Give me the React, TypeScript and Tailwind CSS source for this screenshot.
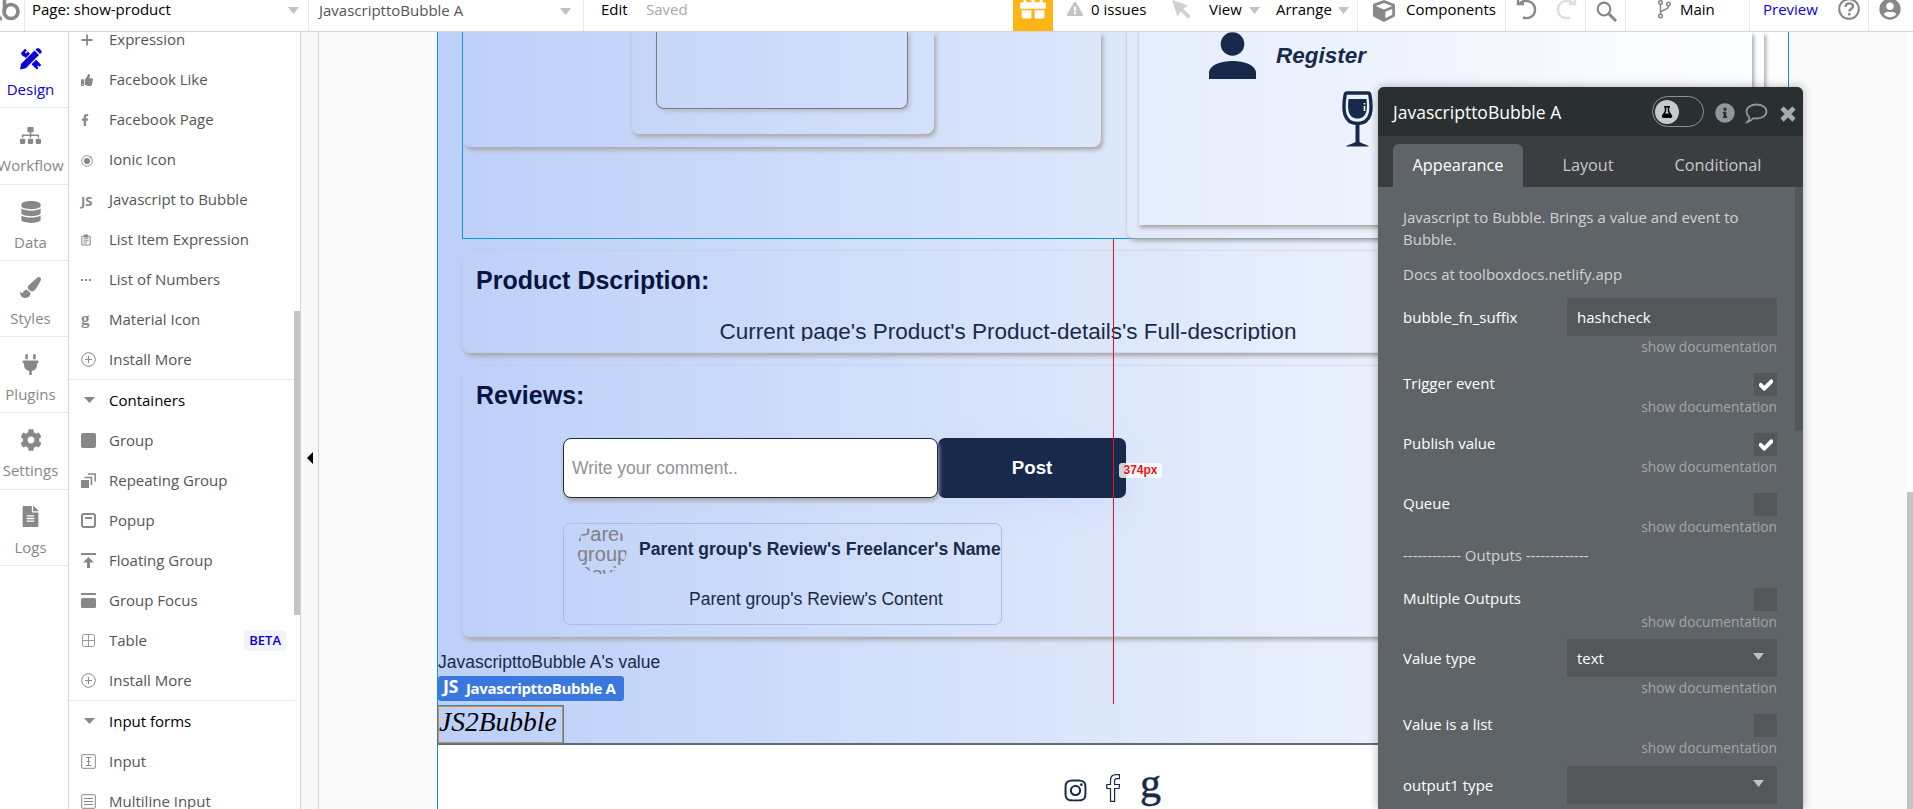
import React from "react";
import {
  FaSitemap, FaDatabase, FaPaintBrush, FaPlug, FaCog, FaFileAlt, FaThumbsUp, FaFacebookF,
  FaGift, FaExclamationTriangle, FaCube, FaFlask, FaInfoCircle, FaCheck,
  FaUserCircle, FaInstagram,
} from "react-icons/fa";

type IconName =
  | "plus" | "thumb" | "fb" | "ionic" | "js" | "clip" | "dots" | "g" | "more" | "caret" | "group"
  | "repeat" | "popup" | "float" | "focus" | "table" | "input" | "multi";

function PaletteIcon({ name }: { name: IconName }) {
  switch (name) {
    case "plus":
      return <svg className="mt-0.5 size-3" viewBox="0 0 12 12"><path d="M6 .5v11M.5 6h11" stroke="#888" strokeWidth="1.800" /></svg>;
    case "thumb":
      return <FaThumbsUp className="mt-0.5 size-3" />;
    case "fb":
      return <FaFacebookF className="mt-0.5 h-3 w-2" />;
    case "ionic":
      return (
        <svg className="mt-1 size-3" viewBox="0 0 14 14" fill="none" stroke="#888">
          <circle cx="7" cy="7" r="6.200" /><circle cx="7" cy="7" r="3.600" fill="#888" stroke="none" /><circle cx="11.500" cy="2.500" r="1" fill="#888" stroke="none" />
        </svg>
      );
    case "js":
      return <span className="mt-1 text-[13px] leading-none font-bold">JS</span>;
    case "clip":
      return (
        <svg className="mt-0.5 h-3.5 w-2.5" viewBox="0 0 12 14" fill="none" stroke="#888" strokeWidth="1.200">
          <path d="M1 2.500h10v10.500H1zM3 5.500h6M3 8h6M3 10.500h4" /><path d="M4 1h4v2.500H4z" fill="#888" />
        </svg>
      );
    case "dots":
      return <svg className="mt-0.5 h-1 w-2.5" viewBox="0 0 10 4" fill="#888"><path d="M0 1h2v2H0zM4 1h2v2H4zM8 1h2v2H8z" /></svg>;
    case "g":
      return <span className="pb-0.5 font-['Liberation_Serif',serif] text-[17px] leading-none font-bold">g</span>;
    case "more":
      return (
        <svg className="size-[15px]" viewBox="0 0 15 15" fill="none" stroke="#888"><circle cx="7.500" cy="7.500" r="6.800" /><path d="M7.500 4v7M4 7.500h7" /></svg>
      );
    case "caret":
      return <svg className="ml-[3px] h-1.5 w-[11px]" viewBox="0 0 11 6" fill="#888"><path d="M0 0h11L5.500 6z" /></svg>;
    case "group":
      return <span className="size-[15px] rounded-[2px] bg-[#888]" />;
    case "repeat":
      return (
        <svg className="size-[15px]" viewBox="0 0 15 15" fill="none" stroke="#888" strokeWidth="1.500">
          <path d="M0 7h8v8H0z" fill="#888" stroke="none" /><path d="M3.500 4.500h7V12M7 1h7.200v7.500" />
        </svg>
      );
    case "popup":
      return (
        <svg className="size-[15px]" viewBox="0 0 15 15" fill="none" stroke="#888" strokeWidth="2"><rect x="1" y="1" width="13" height="13" rx="2" /><path d="M4 5h7" /></svg>
      );
    case "float":
      return <svg className="size-[15px]" viewBox="0 0 15 15" fill="#888"><path d="M0 0h15v2H0zM7.500 4l5.500 5.500H9V15H6V9.500H2z" /></svg>;
    case "focus":
      return <svg className="size-[15px]" viewBox="0 0 15 15" fill="#888"><path d="M0 0h15v2H0z" /><rect y="5" width="15" height="10" rx="1.500" /></svg>;
    case "table":
      return <svg className="size-[15px]" viewBox="0 0 15 15" fill="none" stroke="#999"><rect x="1.500" y="1.500" width="12" height="12" rx="2" /><path d="M7.500 1.500v12M1.500 7.500h12" /></svg>;
    case "input":
      return <svg className="size-[15px]" viewBox="0 0 15 15" fill="none" stroke="#888"><rect x=".7" y=".7" width="13.600" height="13.600" rx="1" /><path d="M5 3.500h5M5 11.500h5M7.500 3.500v8M6 7.500h3" /></svg>;
    default:
      return <svg className="size-[15px]" viewBox="0 0 15 15" fill="none" stroke="#888"><rect x=".7" y=".7" width="13.600" height="13.600" rx="1" /><path d="M3 4.500h9M3 7.500h9M3 10.500h9" /></svg>;
  }
}

function PaletteRow({ icon, label, beta }: { icon: IconName; label: string; beta?: boolean }) {
  return (
    <div className="flex h-10 shrink-0 items-center">
      <div className="flex w-7 items-center text-[#888]"><PaletteIcon name={icon} /></div>
      <span className={icon === "caret" ? "text-black" : "text-[#555]"}>{label}</span>
      {beta && <span className="mr-[14px] ml-auto rounded bg-[#f3f3fd] px-[5px] text-[13px] leading-[21px] font-semibold text-[#0c00d8]">BETA</span>}
    </div>
  );
}

function Palette() {
  return (
    <div className="relative w-[233px] overflow-hidden border-x border-[#d3d3d3] bg-white text-[15px]">
      <div className="-mt-[13px] flex flex-col pl-3">
        <PaletteRow icon="plus" label="Expression" />
        <PaletteRow icon="thumb" label="Facebook Like" />
        <PaletteRow icon="fb" label="Facebook Page" />
        <PaletteRow icon="ionic" label="Ionic Icon" />
        <PaletteRow icon="js" label="Javascript to Bubble" />
        <PaletteRow icon="clip" label="List Item Expression" />
        <PaletteRow icon="dots" label="List of Numbers" />
        <PaletteRow icon="g" label="Material Icon" />
        <PaletteRow icon="more" label="Install More" />
        <div className="-ml-3 h-px w-[226px] bg-[#dfe9f0]" />
        <PaletteRow icon="caret" label="Containers" />
        <PaletteRow icon="group" label="Group" />
        <PaletteRow icon="repeat" label="Repeating Group" />
        <PaletteRow icon="popup" label="Popup" />
        <PaletteRow icon="float" label="Floating Group" />
        <PaletteRow icon="focus" label="Group Focus" />
        <PaletteRow icon="table" label="Table" beta />
        <PaletteRow icon="more" label="Install More" />
        <div className="-ml-3 h-px w-[226px] bg-[#dfe9f0]" />
        <PaletteRow icon="caret" label="Input forms" />
        <PaletteRow icon="input" label="Input" />
        <PaletteRow icon="multi" label="Multiline Input" />
      </div>
      <div className="absolute top-[279px] right-0 h-[304px] w-1.5 bg-[#c4c4c4]" />
    </div>
  );
}

function DesignIcon() {
  return (
    <svg className="size-[22px]" viewBox="0 0 22 22" fill="#0c00d8">
      <path d="M0 21.500L1.200 15.800 14.500 2.500 19 7 5.800 20.300z" />
      <path d="M15.500 1.500L17 .2h2L21.500 2.700v1.800L20 6z" />
      <path d="M.8 5.200L5 .8l1.800 1.800L5 4.400l1 1 1.900-1.800L10 5.800 5.800 10 4 8.200l-1 .2z" />
      <path d="M16 11.800l5.300 5.200-1.800 1.800-1.300-1.300-1 1 1.300 1.300-1.700 1.700-5.300-5.300z" />
    </svg>
  );
}

function NavItem({ icon, label, active }: { icon: React.ReactNode; label: string; active?: boolean }) {
  return (
    <div className={`flex h-[76.25px] w-[68px] shrink-0 flex-col items-center border-b border-[#dcebee] pt-4 ${active ? "text-[#0c00d8]" : "text-[#888]"}`}>
      <div className="mr-[7px] flex h-[22px] items-center justify-center">{icon}</div>
      <span className="mt-[9px] mr-[7px] text-[15px] leading-5">{label}</span>
    </div>
  );
}

function NavRail() {
  return (
    <div className="flex w-[68px] flex-col overflow-hidden bg-white">
      <NavItem active icon={<DesignIcon />} label="Design" />
      <NavItem icon={<FaSitemap className="size-[21px]" />} label="Workflow" />
      <NavItem icon={<FaDatabase className="size-[22px]" />} label="Data" />
      <NavItem icon={<FaPaintBrush className="size-[21px]" />} label="Styles" />
      <NavItem icon={<FaPlug className="size-[21px]" />} label="Plugins" />
      <NavItem icon={<FaCog className="size-[22px]" />} label="Settings" />
      <NavItem icon={<FaFileAlt className="size-[21px]" />} label="Logs" />
    </div>
  );
}

function Caret({ className = "" }: { className?: string }) {
  return <svg className={`h-[7px] w-[11px] shrink-0 ${className}`} viewBox="0 0 11 7" fill="#b9c5ca"><path d="M0 0h11L5.500 7z" /></svg>;
}

function Header() {
  return (
    <header className="flex h-8 shrink-0 overflow-hidden border-b border-[#d5d5d5] bg-white text-[15px] leading-[19px] whitespace-nowrap text-black">
      <div className="w-[25px] border-r border-[#e6eaee]">
        <svg className="h-[22px] w-5" viewBox="0 0 20 22" fill="none" stroke="#888" strokeWidth="3.600"><circle cx="11" cy="11.500" r="7" /><path d="M4.500-4v16" /><path d="M0 16.500v4" /></svg>
      </div>
      <div className="flex w-[284px] items-start border-r border-[#e6eaee] pr-[9px] pl-[7px]"><span>Page: show-product</span><Caret className="mt-[7px] ml-auto" /></div>
      <div className="flex w-[275px] items-start border-r border-[#e6eaee] pr-3 pl-2.5 text-[#555]"><span className="pt-px">JavascripttoBubble A</span><Caret className="mt-2 ml-auto" /></div>
      <span className="w-[45px] pl-[17px]">Edit</span>
      <span className="ml-[17px] text-[#aaa]">Saved</span>
      <div className="ml-auto flex w-[900px] shrink-0 items-start">
        <div className="flex h-[31px] w-10 justify-center bg-[#fdb515]"><FaGift className="-mt-1.5 size-[26px] text-white" /></div>
        <FaExclamationTriangle className="mt-px ml-[14px] size-4 text-[#c4c4c4]" />
        <span className="ml-2 w-[81px]">0 issues</span>
        <svg className="h-[19px] w-[19px]" viewBox="0 0 19 19" fill="#d0d0d0"><path d="M0 0l16 5.500-5 3.200L18.500 16l-2.700 2.700-7-7.300-3.300 5z" /></svg>
        <span className="ml-[18px] w-[40px]">View</span><Caret className="mt-[7px]" />
        <span className="ml-4 w-[62px]">Arrange</span><Caret className="mt-[7px]" />
        <div className="ml-2 h-[31px] w-px bg-[#e6eaee]" />
        <FaCube className="ml-[15px] size-[22px] text-[#888]" />
        <span className="ml-[11px] w-[99px]">Components</span>
        <div className="h-[31px] w-px bg-[#e6eaee]" />
        <svg className="ml-2.5 h-[21px] w-[21px]" viewBox="0 0 21 21" fill="none" stroke="#888" strokeWidth="2.400"><path d="M1 4h7M3 4.500C8-2 19 1 19 10c0 6-6 9.500-12 7.500M2 0v5" /></svg>
        <svg className="ml-[19px] h-[21px] w-[21px]" viewBox="0 0 21 21" fill="none" stroke="#ddd" strokeWidth="2.400"><path d="M20 4h-7M18 4.500C13-2 2 1 2 10c0 6 6 9.500 12 7.500M19 0v5" /></svg>
        <div className="ml-2 h-[31px] w-px bg-[#e6eaee]" />
        <svg className="ml-2.5 h-[22px] w-[22px]" viewBox="0 0 22 22" fill="none" stroke="#888" strokeWidth="2.200"><circle cx="8" cy="9" r="6.300" /><path d="M12.500 13.500L20 21" strokeWidth="3" /></svg>
        <div className="ml-[7px] h-[31px] w-px bg-[#e6eaee]" />
        <svg className="ml-[32px] h-[19px] w-[13px]" viewBox="0 0 13 19" fill="none" stroke="#888" strokeWidth="1.500"><circle cx="2.500" cy="2.500" r="1.800" /><circle cx="2.500" cy="16" r="1.800" /><circle cx="10.500" cy="4" r="1.800" /><path d="M2.500 4.500V14M10.500 6c0 5-8 3-8 7" /></svg>
        <span className="ml-[9px] w-[69px]">Main</span>
        <div className="h-[31px] w-px bg-[#e6eaee]" />
        <span className="ml-[13px] w-[75px] text-[#0c00d8]">Preview</span>
        <svg className="-mt-0.5 h-[22px] w-[22px]" viewBox="0 0 22 22" fill="none" stroke="#888" strokeWidth="2"><circle cx="11" cy="11" r="9.800" /><path d="M7.500 9c0-5 7.500-4.500 7.500-.8 0 2.500-3.700 2.500-3.700 5.300M11.300 15v2.500" strokeWidth="2.400" /></svg>
        <div className="ml-2 h-[31px] w-px bg-[#e6eaee]" />
        <FaUserCircle className="-mt-0.5 ml-2.5 size-[22px] text-[#888]" />
      </div>
    </header>
  );
}

function ProductPage() {
  return (
    <div className="absolute top-0 left-[437px] flex h-[777px] w-[1352px] flex-col border-x border-[#0e97c8] bg-white font-['Liberation_Sans',sans-serif] text-[17.5px] text-[#182a4c]">
      <div className="flex h-[713px] shrink-0 flex-col border-b-2 border-[#666b70] bg-linear-to-r from-[#bccff8] via-[#dde7fb] to-white">
        <div className="ml-6 flex h-[207px] w-[1302px] shrink-0 border-b border-l border-[#0e97c8]">
          <div className="flex h-[115px] w-[638px] justify-center rounded-b-lg shadow-[2px_3px_4px_#a8a8a8]">
            <div className="flex h-[102px] w-[303px] justify-center rounded-b-lg border-l border-[#bccbee] pr-0.5 shadow-[2px_3px_4px_#a8a8a8]">
              <div className="h-[77px] w-[252px] rounded-b-lg border border-t-0 border-[#777b84] shadow-[2px_2px_4px_#b4b8c0]" />
            </div>
          </div>
          <div className="ml-[25px] h-[206px] w-[638px] shrink-0 rounded-b-lg border-l border-[#ccd7ef] bg-white/10 pl-[11px] shadow-[2px_3px_4px_#a8a8a8]">
            <div className="flex h-[193px] w-[614px] flex-col border-l border-[#ccd7ef] bg-white/10 shadow-[2px_3px_4px_#a8a8a8]">
              <div className="flex h-[58px] pl-[70px]">
                <svg className="h-[47px] w-[47px]" viewBox="0 0 47 47" fill="#182a4c"><circle cx="23.500" cy="12" r="11.800" /><path d="M0 47V41C0 33 12 29 23.500 29S47 33 47 41v6z" /></svg>
                <span className="mt-[11px] ml-5 text-[22.5px] leading-[26px] font-bold italic">Register</span>
              </div>
              <svg className="mt-px ml-[203px] h-[56px] w-[31px]" viewBox="0 0 31 56" fill="none" stroke="#182a4c">
                <path d="M5 2h21c1.200 0 1.600.8 1.900 2 2.500 14 2 28.500-12.400 28.500S.6 18 3.100 4C3.400 2.800 3.800 2 5 2z" strokeWidth="3.400" />
                <path d="M6.500 8h18c1 9 1 19.500-9 19.500S5.500 17 6.500 8z" fill="#182a4c" stroke="none" />
                <path d="M22.500 12v1.500M22.500 15v5" stroke="#fff" strokeWidth="1.600" />
                <path d="M15.500 32v19" strokeWidth="4" /><path d="M4 55.500c2-2.500 8-2.500 11.500-6 3.500 3.500 9.500 3.500 11.500 6z" fill="#182a4c" stroke="none" />
              </svg>
            </div>
          </div>
        </div>

        <section className="mt-[11px] ml-6 flex h-[103px] w-[1301px] shrink-0 flex-col rounded-lg border border-[#bfcbe6]/50 px-[13px] shadow-[2px_3px_4px_#a8a8a8]">
          <h2 className="mt-[14px] text-[25px] leading-[30px] font-bold text-[#091443]">Product Dscription:</h2>
          <p className="mt-6 ml-[243.5px] h-[22px] overflow-hidden text-[22.5px] leading-[25px]">Current page's Product's Product-details's Full-description</p>
        </section>

        <section className="mt-3 ml-6 flex h-[272px] w-[1301px] shrink-0 flex-col rounded-lg border border-[#bfcbe6]/50 px-[13px] shadow-[2px_3px_4px_#a8a8a8]">
          <h2 className="mt-[14px] text-[25px] leading-[30px] font-bold text-[#091443]">Reviews:</h2>
          <div className="mt-7 ml-[87px] flex h-[60px]">
            <div className="z-10 flex w-[375px] items-center rounded-lg border border-[#182a4c] bg-white pl-2 text-[#929299] shadow-[1px_3px_4px_#a8a8a8]">Write your comment..</div>
            <div className="flex w-[188px] items-center justify-center rounded-[7px] bg-[#182a4c] text-[18.75px] font-bold text-white shadow-[0_10px_24px_#c8d5f880]">Post</div>
          </div>
          <div className="mt-[25px] ml-[87px] flex h-[102px] w-[439px] flex-col rounded-[7px] border border-[#aebbe0]">
            <div className="flex h-[50px] items-center whitespace-nowrap">
              <div className="ml-[13px] size-[50px] shrink-0 overflow-hidden rounded-full text-[20px] leading-5 whitespace-normal text-[#818181]">
                Parent group's Review's
              </div>
              <span className="ml-3 font-bold">Parent group's Review's Freelancer's Name</span>
            </div>
            <span className="mt-[13px] ml-[125px] leading-6">Parent group's Review's Content</span>
          </div>
        </section>

        <div className="mt-[15px] leading-5">JavascripttoBubble A's value</div>
        <div className="mt-1 flex h-[25px] w-[186px] shrink-0 items-center gap-1 rounded-[3px] bg-[#3a78df] pl-[5px] font-['Open_Sans',sans-serif] text-[15px] font-bold whitespace-nowrap text-white">
          <span className="-mt-1 w-[19px] text-[18px] tracking-[-0.5px]">JS</span><span className="tracking-[-0.35px]">JavascripttoBubble A</span>
        </div>
        <div className="mt-1 -ml-px h-[39px] w-[127px] shrink-0 border border-[#2f83d8]">
          <div className="h-full border border-[#e08a20] font-['Liberation_Serif',serif] text-[27.5px] leading-[30px] text-black italic"><span>JS2Bubble</span></div>
        </div>
      </div>
      <div className="flex items-start pt-[29px] pl-[625px]">
        <FaInstagram className="mt-1 size-[25px]" />
        <svg className="ml-[18px] h-7 w-3.5" viewBox="0 0 14 28" fill="none" stroke="#182a4c" strokeWidth="1.200"><path d="M4.500 27.300V14.500H.8V10.500h3.700V6.500C4.500 2.500 7 .7 10 .7h3.500v4h-2.700C9.200 4.700 8.600 5.500 8.600 7v3.500h5l-.6 4H8.600v12.800z" /></svg>
        <span className="ml-5 font-['Liberation_Serif',serif] text-[42px] leading-[18px] [-webkit-text-stroke:0.5px_#182a4c]">g</span>
      </div>
    </div>
  );
}

function DocLink() {
  return <div className="h-[22px] text-right text-[13.75px] leading-[21px] text-[#a3a6a8]">show documentation</div>;
}

function CheckRow({ label, checked }: { label: string; checked?: boolean }) {
  return (
    <div className="h-[60px] shrink-0">
      <div className="flex h-[23px] items-start justify-between">
        <span className="leading-[21px] text-white">{label}</span>
        <div className="flex size-[23px] items-center justify-center bg-[#535759]">{checked && <FaCheck className="size-3.5 stroke-white stroke-[40px] text-white" />}</div>
      </div>
      <DocLink />
    </div>
  );
}

function FieldRow({ label, value, select }: { label: string; value: string; select?: boolean }) {
  return (
    <div className="h-[75px] shrink-0 leading-[22px]">
      <div className="flex h-[38px] items-center justify-between text-white">
        <span>{label}</span>
        <div className="flex h-[38px] w-[210px] items-center justify-between bg-[#535759] pr-[13px] pl-2.5"><span>{value}</span>{select && <Caret className="-mt-1" />}</div>
      </div>
      <DocLink />
    </div>
  );
}

function PropertyEditor() {
  return (
    <aside className="absolute top-[55px] left-[1378px] flex h-[722px] w-[425px] flex-col overflow-hidden rounded-t-md bg-[#5f6468] text-[15px] shadow-[0_0_10px_rgba(0,0,0,0.3)]">
      <div className="flex h-[49px] shrink-0 items-center bg-[#2a3031] pr-[7px] pl-[15px]">
        <span className="pt-px text-[17.5px] text-white">JavascripttoBubble A</span>
        <div className="ml-auto flex h-[31px] w-[52px] items-center rounded-full border border-[#8b9195] pl-0.5">
          <div className="flex size-6 items-center justify-center rounded-full bg-[#c6cacf]"><FaFlask className="size-3 text-black" /></div>
        </div>
        <FaInfoCircle className="mt-0.5 ml-[11px] size-5 text-[#8f979b]" />
        <svg className="mt-1 ml-2.5 h-[22px] w-[23px]" viewBox="0 0 23 22" fill="none" stroke="#8f979b" strokeWidth="1.800"><path d="M11.500 1.500c5.500 0 10 3 10 7s-4.500 7-10 7c-1 0-2-.1-3-.3-1.500 1.600-3.500 3.300-6 3.800 1.300-1.300 2-3 1.700-4.800-1.600-1.400-2.700-3.400-2.700-5.700 0-4 4.500-7 10-7z" /></svg>
        <svg className="mt-1 ml-3 size-4" viewBox="0 0 16 16" fill="none" stroke="#a3abaf" strokeWidth="4.600"><path d="M2 2l12 12M14 2L2 14" /></svg>
      </div>
      <div className="flex h-[51px] shrink-0 items-end bg-[#3a3e41] pl-[15px] text-[16.25px] text-[#c6c8c9]">
        <div className="flex h-[43px] w-[130px] items-center justify-center rounded-t-md bg-[#5f6468] text-white">Appearance</div>
        <div className="flex h-[43px] w-[130px] items-center justify-center">Layout</div>
        <div className="flex h-[43px] w-[130px] items-center justify-center">Conditional</div>
      </div>
      <div className="flex grow flex-col pr-[26px] pl-[25px]">
        <p className="mt-[19px] h-[56px] shrink-0 leading-[22px] text-[#d0d2d3]">Javascript to Bubble. Brings a value and event to Bubble.</p>
        <p className="h-[36px] shrink-0 leading-6 text-[#d0d2d3]">Docs at toolboxdocs.netlify.app</p>
        <FieldRow label="bubble_fn_suffix" value="hashcheck" />
        <CheckRow label="Trigger event" checked />
        <CheckRow label="Publish value" checked />
        <div className="h-[52px] shrink-0"><CheckRow label="Queue" /></div>
        <div className="h-[43px] shrink-0 leading-5 text-[#d0d2d3]">------------ Outputs -------------</div>
        <div className="h-[51px] shrink-0"><CheckRow label="Multiple Outputs" /></div>
        <FieldRow label="Value type" value="text" select />
        <div className="h-[52px] shrink-0"><CheckRow label="Value is a list" /></div>
        <FieldRow label="output1 type" value="" select />
      </div>
      <div className="absolute top-[100px] right-0 h-[244px] w-2 bg-[#535759]" />
    </aside>
  );
}

export default function App() {
  return (
    <div className="flex h-[809px] w-[1913px] flex-col overflow-hidden bg-[#fafafa] font-['Open_Sans',sans-serif]">
      <Header />
      <div className="relative flex grow overflow-hidden">
        <NavRail />
        <Palette />
        <div className="flex w-[18px] items-center justify-center border-r border-[#d3d3d3] bg-[#f8f8f8] pt-[75px]">
          <svg className="h-3 w-1.5" viewBox="0 0 6 12"><path d="M6 0v12L0 6z" /></svg>
        </div>
        <ProductPage />
        <div className="absolute top-[207px] left-[1113px] z-10 h-[465px] w-px bg-[#ee1111]" />
        <div className="absolute top-[431px] left-[1119px] z-10 h-[15px] w-[43px] rounded-[3px] bg-white/80 text-center font-['Liberation_Sans',sans-serif] text-xs leading-[15px] font-bold text-[#ee1111]">374px</div>
        <PropertyEditor />
        <div className="ml-auto flex w-1.5 flex-col justify-end bg-white"><div className="h-[317px] bg-[#c4c4c4]" /></div>
      </div>
    </div>
  );
}
